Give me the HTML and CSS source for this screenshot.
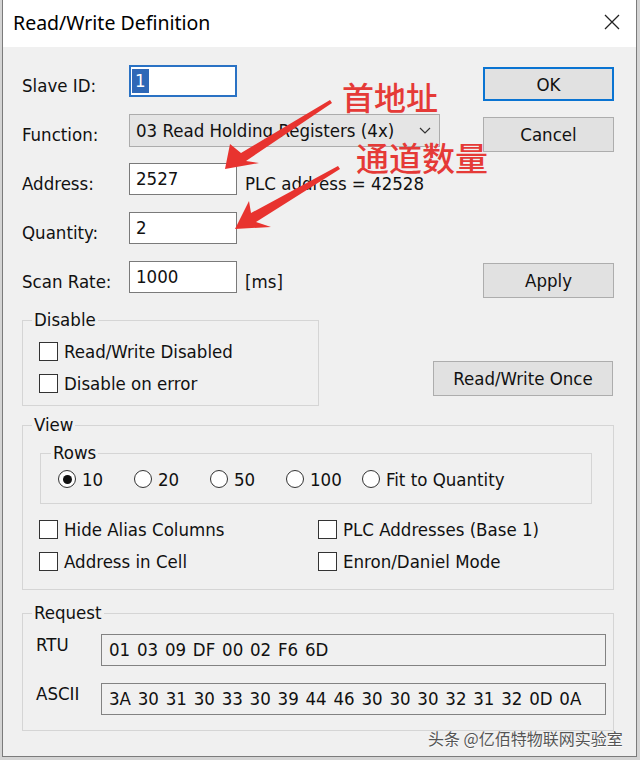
FILE: index.html
```html
<!DOCTYPE html>
<html lang="en">
<head>
  <meta charset="UTF-8" />
  <meta name="viewport" content="width=device-width, initial-scale=1.0"/>
  <title>Read/Write Definition</title>
  <link rel="stylesheet" href="styles.css">
</head>
<body>
  <div class="window">
    <div class="titlebar">
      <span class="title">Read/Write Definition</span>
      <svg class="close" width="16" height="16" viewBox="0 0 16 16">
        <path d="M1 1 L15 15 M15 1 L1 15" stroke="#222" stroke-width="1.3" fill="none"/>
      </svg>
    </div>

    <div class="content">
      <div class="top-grid">
        <span class="lbl">Slave ID:</span>
        <div class="cell"><div class="input focused"><span class="sel">1</span></div></div>
        <button class="btn btn-ok">OK</button>

        <span class="lbl">Function:</span>
        <div class="cell">
          <div class="select">
            <span>03 Read Holding Registers (4x)</span>
            <svg width="12" height="7" viewBox="0 0 12 7"><polyline points="1,1 6,6 11,1" fill="none" stroke="#333" stroke-width="1.2"/></svg>
          </div>
        </div>
        <button class="btn btn-cancel">Cancel</button>

        <span class="lbl">Address:</span>
        <div class="cell"><div class="input">2527</div><span class="note">PLC address = 42528</span></div>
        <span></span>

        <span class="lbl">Quantity:</span>
        <div class="cell"><div class="input">2</div></div>
        <span></span>

        <span class="lbl">Scan Rate:</span>
        <div class="cell"><div class="input">1000</div><span class="note">[ms]</span></div>
        <button class="btn btn-apply">Apply</button>
      </div>

      <div class="middle">
        <fieldset class="group disable">
          <legend>Disable</legend>
          <div class="check-row"><span class="box"></span>Read/Write Disabled</div>
          <div class="check-row"><span class="box"></span>Disable on error</div>
        </fieldset>
        <button class="btn btn-once">Read/Write Once</button>
      </div>

      <fieldset class="group view">
        <legend>View</legend>
        <fieldset class="group rows">
          <legend>Rows</legend>
          <div class="radio-row">
            <div class="radio"><span class="circle on"></span>10</div>
            <div class="radio"><span class="circle"></span>20</div>
            <div class="radio"><span class="circle"></span>50</div>
            <div class="radio"><span class="circle"></span>100</div>
            <div class="radio last"><span class="circle"></span>Fit to Quantity</div>
          </div>
        </fieldset>
        <div class="opts">
          <div class="check-row"><span class="box"></span>Hide Alias Columns</div>
          <div class="check-row"><span class="box"></span>PLC Addresses (Base 1)</div>
          <div class="check-row"><span class="box"></span>Address in Cell</div>
          <div class="check-row"><span class="box"></span>Enron/Daniel Mode</div>
        </div>
      </fieldset>

      <fieldset class="group request">
        <legend>Request</legend>
        <div class="req-row">
          <span class="req-label">RTU</span>
          <div class="hexbox">01 03 09 DF 00 02 F6 6D</div>
        </div>
        <div class="req-row">
          <span class="req-label">ASCII</span>
          <div class="hexbox">3A 30 31 30 33 30 39 44 46 30 30 30 32 31 32 0D 0A</div>
        </div>
      </fieldset>
    </div>

    <!-- annotations drawn over the dialog -->
    <svg class="arrows" width="633" height="756" viewBox="3 0 633 756">
      <polygon points="225,169 230,144 241,153 330,100 332,103 246,161 259,163" fill="#e8332f"/>
      <polygon points="235,229 249,201 251,213 338,166 340,169 256,222 271,227" fill="#e8332f"/>
    </svg>
    <span class="cn cn1">首地址</span>
    <span class="cn cn2">通道数量</span>
    <span class="watermark">头条 @亿佰特物联网实验室</span>
  </div>
</body>
</html>
```

FILE: styles.css
```css
* { margin: 0; padding: 0; box-sizing: border-box; }

body {
  background: #d4d4d4;
  font-family: "DejaVu Sans Condensed", "DejaVu Sans", sans-serif;
  font-stretch: condensed;
  font-size: 18.5px;
  color: #111;
}

.window {
  position: relative;
  width: 635px;
  height: 757px;
  margin-left: 2px;
  border: 1px solid #7b7b7b;
  border-top: none;
  background: #f0f0f0;
}

.titlebar {
  height: 47px;
  background: #fff;
  display: flex;
  align-items: center;
  justify-content: space-between;
  padding: 0 16px 3px 10px;
}

.title {
  font-family: "Noto Sans", sans-serif;
  font-stretch: normal;
  font-size: 19.5px;
  color: #000;
}

.content {
  padding: 18px 22px 0 19px;
}

/* top form */
.top-grid {
  display: grid;
  grid-template-columns: 107px 1fr 131px;
  grid-auto-rows: 32px;
  row-gap: 17px;
}

.lbl {
  padding-top: 5px;
  line-height: 32px;
  white-space: nowrap;
}

.note {
  padding-top: 11px;
  line-height: 20px;
  white-space: nowrap;
}

.cell {
  display: flex;
  gap: 8px;
}

.input {
  width: 108px;
  height: 32px;
  background: #fff;
  border: 1px solid #7a7a7a;
  padding: 0 6px;
  line-height: 30px;
}

.input.focused {
  border: 2px solid #2a72c4;
  padding: 0 1px;
  display: flex;
  align-items: center;
}

.sel {
  display: inline-block;
  line-height: 24px;
  padding: 0 3px;
  background: #2f68b7;
  color: #fff;
}

.select {
  width: 311px;
  height: 33px;
  background: #e5e5e5;
  border: 1px solid #acacac;
  display: flex;
  align-items: center;
  padding: 0 8px 0 6px;
  white-space: nowrap;
}

.select svg {
  margin-left: auto;
}

.btn {
  font: inherit;
  color: #111;
  background: #e1e1e1;
  border: 1px solid #adadad;
  height: 35px;
}

.btn-ok {
  border: 2px solid #0a74d2;
  height: 34px;
  margin-top: 2px;
}

.btn-cancel { margin-top: 3px; }
.btn-apply { margin-top: 2px; }

/* group boxes */
.group {
  border: 1px solid #d5d5d5;
  min-width: 0;
}

.group legend {
  margin-left: -7px;
  padding: 0 2px;
  line-height: 20px;
}

.middle {
  display: flex;
  align-items: flex-start;
  margin-top: 17px;
}

.disable {
  width: 297px;
  padding: 5px 0 6px 16px;
}

.check-row {
  height: 32px;
  display: flex;
  align-items: center;
  gap: 6px;
  white-space: nowrap;
}

.box {
  width: 19px;
  height: 19px;
  border: 1px solid #333;
  background: #fff;
  flex-shrink: 0;
}

.btn-once {
  margin-left: auto;
  margin-right: 1px;
  margin-top: 51px;
  width: 180px;
}

.view {
  margin-top: 9px;
  padding: 8px 21px 12px 16px;
}

.rows {
  margin-left: 1px;
  padding: 0 0 8px 17px;
}

.radio-row {
  height: 32px;
  display: flex;
  align-items: center;
}

.radio {
  width: 76px;
  display: flex;
  align-items: center;
  gap: 6px;
  white-space: nowrap;
}

.radio.last { width: auto; }

.circle {
  width: 18px;
  height: 18px;
  border: 1px solid #333;
  border-radius: 50%;
  background: #fff;
  display: grid;
  place-items: center;
}

.circle.on::after {
  content: "";
  width: 9px;
  height: 9px;
  border-radius: 50%;
  background: #111;
}

.opts {
  display: grid;
  grid-template-columns: 279px 1fr;
  margin-top: 9px;
}

.request {
  margin-top: 13px;
  padding: 11px 7px 15px 13px;
}

.request legend {
  margin-left: -4px;
}

.req-row {
  display: flex;
  align-items: flex-start;
}

.req-row + .req-row { margin-top: 17px; }

.req-label {
  width: 65px;
  line-height: 22px;
}

.hexbox {
  flex: 1;
  height: 32px;
  border: 1px solid #828282;
  background: #f0f0f0;
  padding-left: 7px;
  line-height: 30px;
  word-spacing: 1.5px;
  white-space: nowrap;
}

/* overlays */
.arrows {
  position: absolute;
  left: 0;
  top: 0;
  pointer-events: none;
}

.cn {
  position: absolute;
  font-family: "Noto Sans CJK SC", sans-serif;
  font-weight: 500;
  color: #e53a37;
  line-height: 32px;
  white-space: nowrap;
}

.cn1 { left: 339px; top: 80px; font-size: 32px; }
.cn2 { left: 353px; top: 141px; font-size: 33px; }

.watermark {
  position: absolute;
  left: 425px;
  top: 729px;
  font-family: "Noto Sans CJK SC", sans-serif;
  font-stretch: normal;
  font-size: 16px;
  line-height: 18px;
  color: #555;
  text-shadow: 0 1px 1px #fff;
  white-space: nowrap;
}
```
